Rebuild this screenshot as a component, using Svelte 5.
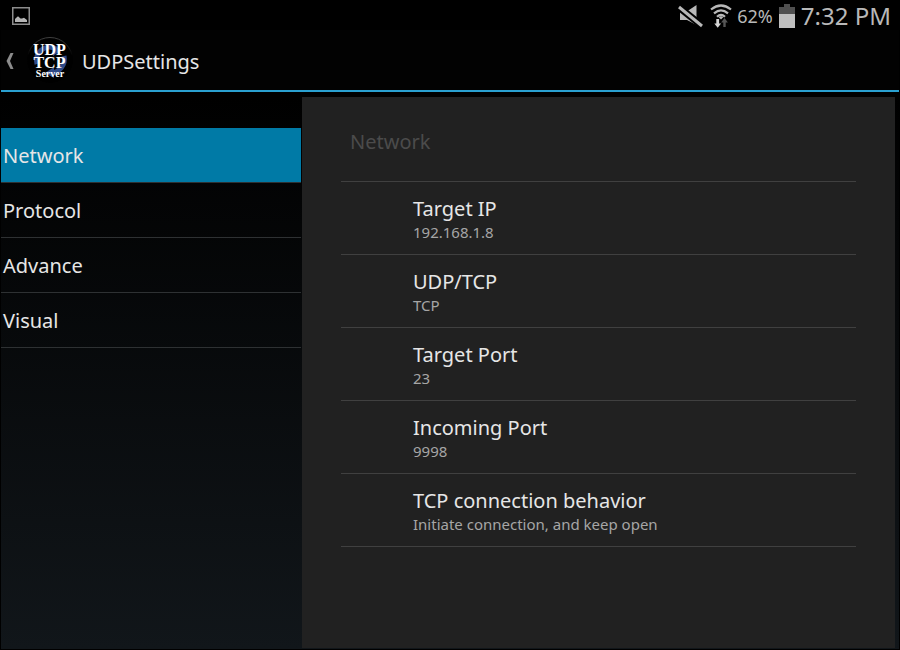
<script lang="ts">
  /**
   * Settings screen with a category list on the left
   * and the preferences of the selected category on the right.
   */

  interface Preference {
    title: string;
    summary: string;
  }

  const categories = ['Network', 'Protocol', 'Advance', 'Visual'];

  const preferences: Record<string, Preference[]> = {
    Network: [
      { title: 'Target IP', summary: '192.168.1.8' },
      { title: 'UDP/TCP', summary: 'TCP' },
      { title: 'Target Port', summary: '23' },
      { title: 'Incoming Port', summary: '9998' },
      { title: 'TCP connection behavior', summary: 'Initiate connection, and keep open' }
    ]
  };

  let selected = $state('Network');
  let items = $derived(preferences[selected] ?? []);
</script>

<div class="screen">
  <div class="status-bar">
    <svg width="18" height="18" viewBox="0 0 18 18" aria-hidden="true">
      <rect x="0.75" y="0.75" width="16.5" height="16.5" fill="none" stroke="#8c8c8c" stroke-width="1.5" />
      <path d="M3 15v-3l1.500-1.500 1.500-1.200 2.500 2.200h1.500l2-.8 3 2.300V15z" fill="#b4b4b4" />
    </svg>

    <div class="status-right">
      <svg width="25" height="24" viewBox="0 0 25 24" aria-hidden="true">
        <path d="M2 8h6L18.500 1v20L9 16H2z" fill="#b8b8b8" />
        <path d="M0 2.500L25 22.500" stroke="#000" stroke-width="7" />
        <path d="M1 3L24 22" stroke="#b8b8b8" stroke-width="3" />
      </svg>
      <svg class="wifi-icon" width="22" height="24" viewBox="0 0 22 24" aria-hidden="true">
        <g fill="none" stroke="#b8b8b8" stroke-width="2.200">
          <path d="M1 5.500Q11 -2.500 21 5.500" />
          <path d="M4 9.300Q11 3.300 18 9.300" />
          <path d="M7 12.800Q11 9.200 15 12.800" />
        </g>
        <path d="M8.700 13.200L11 15.500l2.300-2.300Q11 11.500 8.700 13.200z" fill="#b8b8b8" />
        <path d="M6.300 15h2.800v4.500h2L7.700 23.800 4.300 19.500h2z" fill="#d4d4d4" />
        <path d="M13.300 23v-4.500h-2.200L14.500 14l3.400 4.500h-2.200V23z" fill="#555" />
      </svg>
      <span class="battery-level">62%</span>
      <svg class="battery-icon" width="16" height="24" viewBox="0 0 16 24" aria-hidden="true">
        <path d="M5 0h6v3h5v8H0V3h5z" fill="#505050" />
        <rect y="10" width="16" height="14" fill="#bebebe" />
      </svg>
      <span class="clock">7:32 PM</span>
    </div>
  </div>

  <header class="action-bar">
    <button class="back" type="button" aria-label="Back">
      <svg width="9" height="18" viewBox="0 0 9 18" aria-hidden="true">
        <path d="M5.500 1h3L5 9l3.500 8h-3L1.500 9z" fill="#8c8c8c" />
      </svg>
    </button>
    <svg class="logo" width="48" height="48" viewBox="0 0 48 48" aria-hidden="true">
      <defs>
        <linearGradient id="rim" x1="0" y1="0" x2="0" y2="1">
          <stop offset="0" stop-color="#404040" />
          <stop offset="0.4" stop-color="#000" />
        </linearGradient>
      </defs>
      <circle cx="24" cy="23" r="22.500" fill="#000" stroke="url(#rim)" />
      <g fill="none" stroke="#2f4a88" stroke-width="5">
        <path d="M11 27a13 13 0 0 1 19-15" />
        <path d="M38 19a14 14 0 0 1-14 17" />
      </g>
      <path d="M27 8l9 5-9 6zM28 30l-9 6 9 5z" fill="#2f4a88" />
      <text class="logo-text" text-anchor="middle">
        <tspan x="25" y="18">UDP</tspan>
        <tspan x="25" y="31">TCP</tspan>
        <tspan class="logo-small" x="24" y="40">Server</tspan>
      </text>
    </svg>
    <h1>UDPSettings</h1>
  </header>

  <div class="content">
    <nav class="categories" aria-label="Categories">
      {#each categories as category}
        <button
          class="category"
          class:active={category === selected}
          type="button"
          aria-current={category === selected ? 'page' : undefined}
          onclick={() => (selected = category)}
        >
          {category}
        </button>
      {/each}
    </nav>

    <main class="panel">
      <h2>{selected}</h2>
      <ul class="preferences">
        {#each items as item}
          <li>
            <button class="preference" type="button">
              <span class="title">{item.title}</span>
              <span class="summary">{item.summary}</span>
            </button>
          </li>
        {/each}
      </ul>
    </main>
  </div>
</div>

<style>
  :global(body) {
    margin: 0;
    background: #000;
  }

  .screen {
    display: flex;
    flex-direction: column;
    box-sizing: border-box;
    min-height: 100vh;
    border: 1px solid #000;
    background: linear-gradient(#000 15%, #11161a);
    color: #e6e6e6;
    font-family: 'Noto Sans', 'Open Sans', sans-serif;
  }

  button {
    margin: 0;
    padding: 0;
    border: none;
    background: none;
    color: inherit;
    font: inherit;
    text-align: left;
    cursor: pointer;
  }

  button:focus-visible {
    outline: 2px solid #33b5e5;
    outline-offset: -2px;
  }

  /* Status bar */
  .status-bar {
    display: flex;
    align-items: center;
    justify-content: space-between;
    height: 29px;
    padding: 0 8px 0 11px;
    background: #000;
    color: #b8b8b8;
  }

  .status-right {
    display: flex;
    align-items: center;
  }

  .wifi-icon {
    margin: 0 5px 0 7px;
  }

  .battery-level {
    font-size: 18px;
    line-height: 28px;
  }

  .battery-icon {
    margin: 0 6px;
  }

  .clock {
    font-size: 24px;
    line-height: 28px;
  }

  /* Action bar */
  .action-bar {
    display: flex;
    align-items: center;
    height: 58px;
    padding-top: 2px;
    border-bottom: 2px solid #2aa0d0;
    background: #020202;
  }

  .back {
    display: flex;
    padding: 0 12px 0 4px;
  }

  .logo {
    margin-right: 8px;
  }

  .logo-text {
    fill: #fff;
    font-family: 'Liberation Serif', serif;
    font-size: 16px;
    font-weight: 700;
  }

  .logo-small {
    font-size: 10px;
  }

  h1 {
    margin: 0;
    padding-top: 2px;
    font-size: 20px;
    font-weight: 400;
    line-height: 28px;
  }

  /* Two panes */
  .content {
    display: grid;
    flex: 1;
    grid-template-columns: minmax(0, 301fr) minmax(0, 593fr);
    padding: 5px 4px 1px 0;
  }

  .categories {
    padding: 31px 1px 0 0;
  }

  .category {
    display: block;
    box-sizing: border-box;
    width: 100%;
    height: 55px;
    padding: 2px 0 0 2px;
    border-bottom: 1px solid #2e3133;
    font-size: 20px;
    line-height: 28px;
  }

  .category.active {
    background: #007aa6;
  }

  .panel {
    padding: 31px 39px;
    background: #212121;
  }

  h2 {
    margin: 0;
    padding: 0 9px 25px;
    color: #4b4b4b;
    font-size: 20px;
    font-weight: 400;
    line-height: 28px;
  }

  .preferences {
    margin: 0;
    padding: 0;
    border-top: 1px solid #404040;
    list-style: none;
  }

  .preference {
    display: flex;
    flex-direction: column;
    box-sizing: border-box;
    width: 100%;
    padding: 14px 72px 12px;
    border-bottom: 1px solid #404040;
  }

  .title {
    font-size: 20px;
    line-height: 26px;
  }

  .summary {
    color: #a6a6a6;
    font-size: 15px;
    line-height: 20px;
  }
</style>
